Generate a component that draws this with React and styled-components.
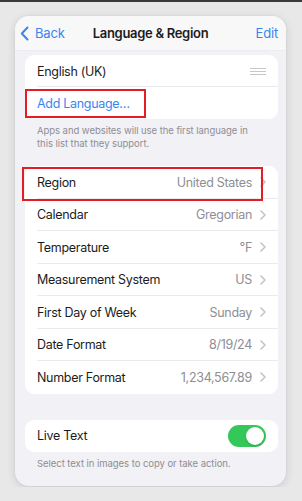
import React from 'react';
import styled, { createGlobalStyle } from 'styled-components';

const GlobalStyle = createGlobalStyle`
  html, body {
    margin: 0;
    padding: 0;
    background: #e8e8e8;
    font-family: Inter, "Noto Sans", "Liberation Sans", sans-serif;
  }
  body {
    border-top: 2px solid #3a3a3a;
  }
`;

const Page = styled.div`
  padding: 14px 0 0 15px;
  height: 485px;
  box-sizing: border-box;
`;

const Phone = styled.div`
  width: 271px;
  height: 470px;
  border-radius: 14px;
  overflow: hidden;
  background: #f1f1f6;
  box-shadow: 0 2px 10px rgba(0, 0, 0, 0.12), 0 0 2px rgba(0, 0, 0, 0.08);
  display: flex;
  flex-direction: column;
`;

const NavBar = styled.div`
  height: 34px;
  background: #f8f8f8;
  border-bottom: 1px solid #ececf0;
  display: flex;
  align-items: center;
  justify-content: space-between;
  padding: 0 8px 0 5px;
  position: relative;
`;

const NavButton = styled.div`
  display: flex;
  align-items: center;
  gap: 6px;
  color: #3a85f0;
  font-size: 13px;
  letter-spacing: -0.2px;
`;

const Title = styled.div`
  position: absolute;
  left: 0;
  right: 0;
  text-align: center;
  font-weight: 600;
  font-size: 13px;
  letter-spacing: -0.3px;
  color: #1c1c1e;
  pointer-events: none;
`;

const Content = styled.div`
  padding: 4px 8px 0 10px;
  display: flex;
  flex-direction: column;
`;

const Group = styled.div`
  background: #ffffff;
  border-radius: 9px;
  position: relative;
  margin-top: ${p => p.$top || 0}px;
`;

const Row = styled.div`
  height: ${p => p.$h || 32.5}px;
  display: flex;
  align-items: center;
  padding: 0 12px 0 12px;
  position: relative;
  font-size: 12.5px;
  letter-spacing: -0.3px;
  color: #1c1c1e;
  &:not(:last-child)::after {
    content: '';
    position: absolute;
    left: 12px;
    right: 0;
    bottom: 0;
    border-bottom: 1px solid #ebebef;
  }
`;

const Label = styled.span`
  flex: 1;
  color: ${p => (p.$link ? '#3a85f0' : '#1c1c1e')};
`;

const Value = styled.span`
  color: #8e8e93;
  margin-right: 8px;
`;

const Highlight = styled.div`
  position: absolute;
  z-index: 1;
  border: 2px solid #e51c23;
  left: ${p => p.$l}px;
  top: ${p => p.$t}px;
  width: ${p => p.$w}px;
  height: ${p => p.$hh}px;
  box-sizing: border-box;
  pointer-events: none;
`;

const Footnote = styled.div`
  font-size: 9.5px;
  line-height: 13px;
  letter-spacing: -0.05px;
  color: #8e8e93;
  padding: 5px 12px 0 12px;
`;

const Handle = styled.div`
  width: 16px;
  display: flex;
  flex-direction: column;
  gap: 2px;
  & > span {
    height: 1px;
    background: #c7c7cc;
  }
`;

const Toggle = styled.div`
  width: 38px;
  height: 22px;
  border-radius: 11px;
  background: #34c759;
  position: relative;
  &::after {
    content: '';
    position: absolute;
    right: 2px;
    top: 2px;
    width: 18px;
    height: 18px;
    border-radius: 50%;
    background: #fff;
    box-shadow: 0 1px 2px rgba(0, 0, 0, 0.2);
  }
`;

const Chevron = () => (
  <svg width="6" height="10" viewBox="0 0 6 10" fill="none">
    <path d="M1 1l4 4-4 4" stroke="#c4c4c7" strokeWidth="1.6" strokeLinecap="round" strokeLinejoin="round" />
  </svg>
);

const BackChevron = () => (
  <svg width="9" height="15" viewBox="0 0 9 15" fill="none">
    <path d="M7.5 1.5L1.8 7.5l5.7 6" stroke="#3a85f0" strokeWidth="2" strokeLinecap="round" strokeLinejoin="round" />
  </svg>
);

const settings = [
  ['Region', 'United States'],
  ['Calendar', 'Gregorian'],
  ['Temperature', '°F'],
  ['Measurement System', 'US'],
  ['First Day of Week', 'Sunday'],
  ['Date Format', '8/19/24'],
  ['Number Format', '1,234,567.89'],
];

export default function App() {
  return (
    <>
      <GlobalStyle />
      <Page>
        <Phone>
          <NavBar>
            <NavButton>
              <BackChevron />
              <span>Back</span>
            </NavButton>
            <Title>Language &amp; Region</Title>
            <NavButton>Edit</NavButton>
          </NavBar>
          <Content>
            <Group>
              <Highlight $l={0} $t={34} $w={121} $hh={29} />
              <Row $h={32}>
                <Label>English (UK)</Label>
                <Handle>
                  <span />
                  <span />
                  <span />
                </Handle>
              </Row>
              <Row $h={32}>
                <Label $link>Add Language…</Label>
              </Row>
            </Group>
            <Footnote>
              Apps and websites will use the first language in this list that they support.
            </Footnote>
            <Group $top={16}>
              <Highlight $l={-3} $t={1} $w={241} $hh={34} />
              {settings.map(([k, v]) => (
                <Row key={k}>
                  <Label>{k}</Label>
                  <Value>{v}</Value>
                  <Chevron />
                </Row>
              ))}
            </Group>
            <Group $top={26}>
              <Row $h={32}>
                <Label>Live Text</Label>
                <Toggle />
              </Row>
            </Group>
            <Footnote>Select text in images to copy or take action.</Footnote>
          </Content>
        </Phone>
      </Page>
    </>
  );
}
